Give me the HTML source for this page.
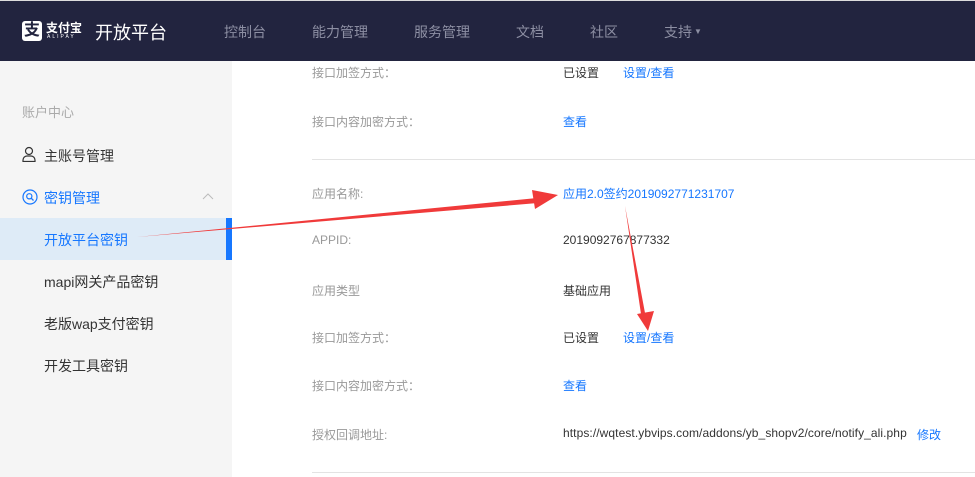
<!DOCTYPE html>
<html><head><meta charset="utf-8"><style>
*{margin:0;padding:0;box-sizing:border-box}
body{width:975px;height:477px;overflow:hidden;background:#fff;font-family:"Liberation Sans","Noto Sans CJK SC",sans-serif;position:relative}
.hd{position:absolute;left:0;top:0;width:975px;height:61px;background:#22243f;border-top:1px solid #ddd}
.abs{position:absolute;white-space:nowrap}
.nav{color:#8d8fa3;font-size:14px;top:22px}
.sb{position:absolute;left:0;top:61px;width:232px;height:416px;background:#f5f5f5}
.si{font-size:14px;color:#333}
.lb{font-size:12px;color:#999;left:312px}
.v{font-size:12px;color:#333;left:563px}
.lk{font-size:12px;color:#1677ff}
.hr{position:absolute;left:312px;height:1px;background:#e3e3e3;width:663px}
</style></head><body>
<div class="hd"></div>
<div class="abs" style="left:22px;top:21px;width:20px;height:20px;background:#fff;border-radius:3px;color:#22243f;font-size:16px;line-height:20px;text-align:center;font-weight:bold">支</div>
<div class="abs" style="left:46px;top:19px;color:#fff;font-size:12px;font-weight:bold">支付宝</div>
<div class="abs" style="left:47px;top:34px;color:#fff;font-size:5px;letter-spacing:2px">ALIPAY</div>
<div class="abs" style="left:95px;top:19px;color:#fff;font-size:18px">开放平台</div>
<div class="abs nav" style="left:224px">控制台</div>
<div class="abs nav" style="left:312px">能力管理</div>
<div class="abs nav" style="left:414px">服务管理</div>
<div class="abs nav" style="left:516px">文档</div>
<div class="abs nav" style="left:590px">社区</div>
<div class="abs nav" style="left:664px">支持<span style="font-size:8px;position:relative;top:-3px;margin-left:2px">▼</span></div>

<div class="sb"></div>
<div class="abs" style="left:22px;top:102px;font-size:13px;color:#aaa">账户中心</div>
<svg class="abs" style="left:22px;top:146px" width="14" height="16" viewBox="0 0 14 16"><circle cx="7" cy="5" r="3.5" fill="none" stroke="#333" stroke-width="1.2"/><path d="M1 15.5v-1.5a4 4 0 0 1 4-4h4a4 4 0 0 1 4 4v1.5z" fill="none" stroke="#333" stroke-width="1.2"/></svg>
<div class="abs si" style="left:44px;top:146px">主账号管理</div>
<svg class="abs" style="left:22px;top:189px" width="16" height="16" viewBox="0 0 16 16"><circle cx="8" cy="8" r="7" fill="none" stroke="#1677ff" stroke-width="1.2"/><circle cx="7.3" cy="7.3" r="2.6" fill="none" stroke="#1677ff" stroke-width="1.2"/><path d="M9.2 9.2l2.3 2.3" stroke="#1677ff" stroke-width="1.3"/></svg>
<div class="abs si" style="left:44px;top:188px;color:#1677ff">密钥管理</div>
<svg class="abs" style="left:202px;top:193px" width="12" height="7"><path d="M1 6l5-5 5 5" fill="none" stroke="#bbb" stroke-width="1"/></svg>
<div class="abs" style="left:0;top:218px;width:232px;height:42px;background:#deebf7"></div>
<div class="abs" style="left:226px;top:218px;width:6px;height:42px;background:#1677ff"></div>
<div class="abs si" style="left:44px;top:230px;color:#1677ff">开放平台密钥</div>
<div class="abs si" style="left:44px;top:272px">mapi网关产品密钥</div>
<div class="abs si" style="left:44px;top:314px">老版wap支付密钥</div>
<div class="abs si" style="left:44px;top:356px">开发工具密钥</div>

<div class="abs lb" style="top:64px">接口加签方式：</div>
<div class="abs v" style="top:64px">已设置</div>
<div class="abs lk" style="left:623px;top:64px">设置/查看</div>
<div class="abs lb" style="top:113px">接口内容加密方式：</div>
<div class="abs lk" style="left:563px;top:113px">查看</div>
<div class="hr" style="top:159px"></div>
<div class="abs lb" style="top:185px">应用名称:</div>
<div class="abs lk" style="left:563px;top:185px">应用2.0签约2019092771231707</div>
<div class="abs lb" style="top:233px">APPID:</div>
<div class="abs v" style="top:233px">2019092767877332</div>
<div class="abs lb" style="top:282px">应用类型</div>
<div class="abs v" style="top:282px">基础应用</div>
<div class="abs lb" style="top:329px">接口加签方式：</div>
<div class="abs v" style="top:329px">已设置</div>
<div class="abs lk" style="left:623px;top:329px">设置/查看</div>
<div class="abs lb" style="top:377px">接口内容加密方式：</div>
<div class="abs lk" style="left:563px;top:377px">查看</div>
<div class="abs lb" style="top:426px">授权回调地址:</div>
<div class="abs v" style="top:426px;letter-spacing:0.08px">https://wqtest.ybvips.com/addons/yb_shopv2/core/notify_ali.php</div>
<div class="abs lk" style="left:917px;top:426px">修改</div>
<div class="hr" style="top:472px"></div>

<svg class="abs" style="left:0;top:0" width="975" height="477">
<path d="M137 237L537 198L538 203Z" fill="#f03a3a"/>
<path d="M558 195L532 190L535 209Z" fill="#f03a3a"/>
<path d="M625 206L641 314L645 313Z" fill="#f03a3a"/>
<path d="M648 331L637 314L654 311Z" fill="#f03a3a"/>
</svg>
</body></html>
